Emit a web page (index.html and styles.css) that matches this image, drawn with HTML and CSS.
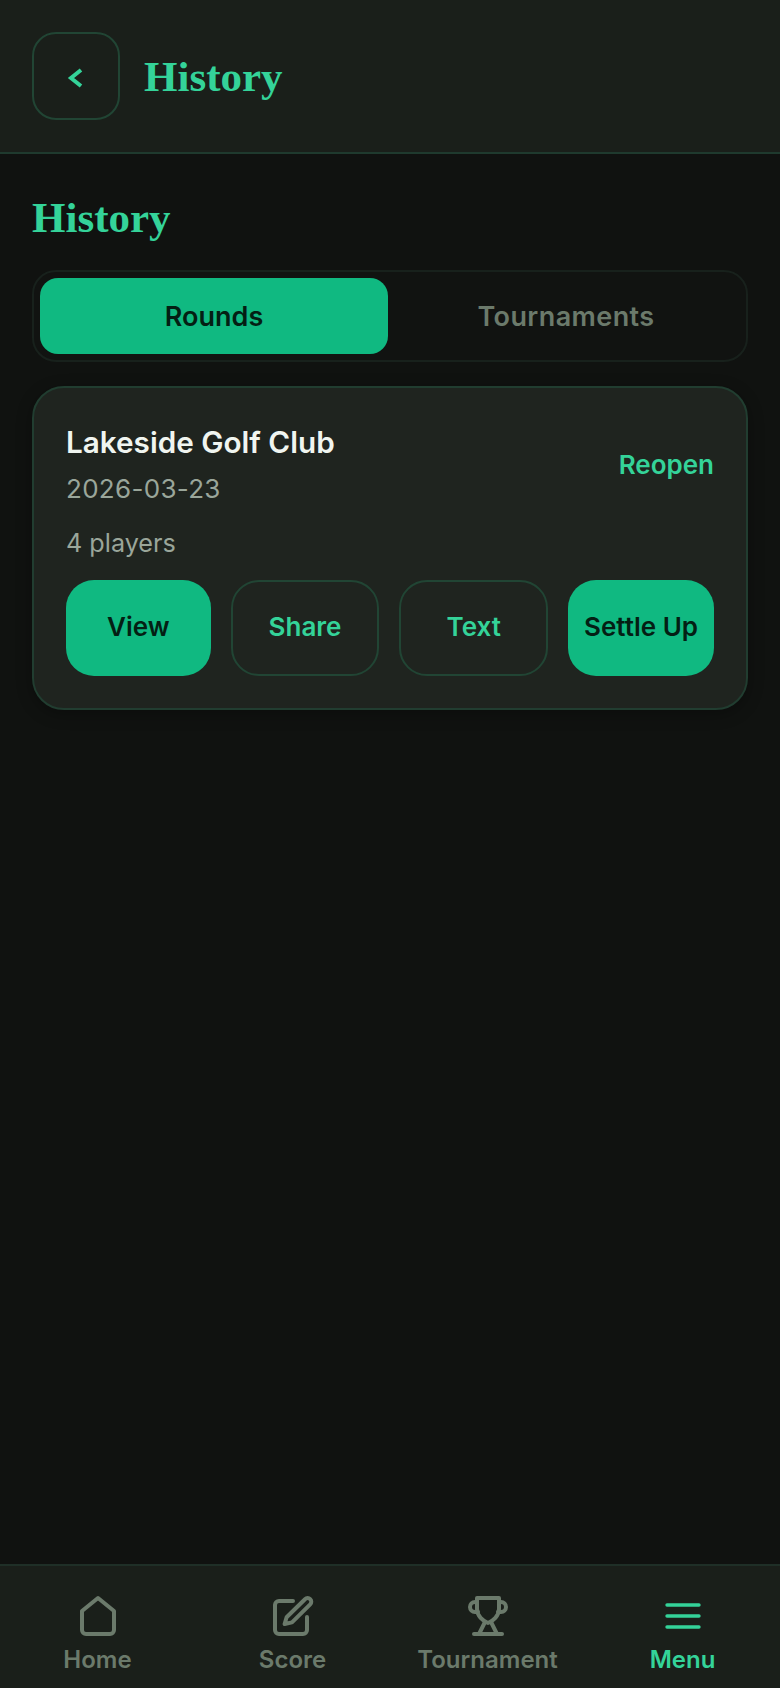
FILE: index.html
```html
<!DOCTYPE html>
<html lang="en">
<head>
    <meta charset="UTF-8">
    <meta name="viewport" content="width=device-width, initial-scale=1.0">
    <title>History</title>
    <link rel="stylesheet" href="styles.css">
</head>
<body>
    <header class="topbar">
        <button class="back-btn" type="button" aria-label="Back">
            <svg width="20" height="24" viewBox="0 0 20 24"><path d="M15 4 L5 12 L15 20"/></svg>
        </button>
        <h1 class="serif-title">History</h1>
    </header>

    <main class="content">
        <h2 class="serif-title">History</h2>

        <div class="tabs">
            <button class="tab active" type="button">Rounds</button>
            <button class="tab" type="button">Tournaments</button>
        </div>

        <section class="card">
            <div class="card-head">
                <div>
                    <div class="course">Lakeside Golf Club</div>
                    <div class="meta date">2026-03-23</div>
                </div>
                <a class="reopen" href="#">Reopen</a>
            </div>
            <div class="meta players">4 players</div>
            <div class="actions">
                <button class="action solid" type="button">View</button>
                <button class="action outline" type="button">Share</button>
                <button class="action outline" type="button">Text</button>
                <button class="action solid" type="button">Settle Up</button>
            </div>
        </section>
    </main>

    <nav class="bottom-nav">
        <a class="nav-item" href="#">
            <svg viewBox="0 0 24 24"><path d="M12 3 L20 9.5 V19 a2 2 0 0 1-2 2 H6 a2 2 0 0 1-2-2 V9.5 Z"/></svg>
            <span>Home</span>
        </a>
        <a class="nav-item" href="#">
            <svg viewBox="0 0 24 24">
                <path d="M12 4.5 H5 a2 2 0 0 0-2 2 V19 a2 2 0 0 0 2 2 h12 a2 2 0 0 0 2-2 v-6.5"/>
                <path d="M18 3.6 a1.8 1.8 0 0 1 2.6 2.6 L11.5 15.2 L7.8 16 L8.8 12.6 Z"/>
            </svg>
            <span>Score</span>
        </a>
        <a class="nav-item" href="#">
            <svg viewBox="0 0 24 24">
                <path d="M6.5 3 H17.5 V8.5 C17.5 12 14.5 14.5 12 15.5 C9.5 14.5 6.5 12 6.5 8.5 Z"/>
                <path d="M6.5 5 H5.5 a2.5 2.5 0 0 0 0 5 H7"/>
                <path d="M17.5 5 H18.5 a2.5 2.5 0 0 1 0 5 H17"/>
                <path d="M10.5 15 L7.5 21"/>
                <path d="M13.5 15 L16.5 21"/>
                <path d="M5 21 H19"/>
            </svg>
            <span>Tournament</span>
        </a>
        <a class="nav-item current" href="#">
            <svg class="thin" viewBox="0 0 24 24"><path d="M4 6.5 H20 M4 12 H20 M4 17.5 H20"/></svg>
            <span>Menu</span>
        </a>
    </nav>
</body>
</html>
```

FILE: styles.css
```css
* {
    box-sizing: border-box;
}

html,
body {
    height: 100%;
}

body {
    margin: 0;
    display: flex;
    flex-direction: column;
    background-color: #101210;
    font-family: Inter, "Liberation Sans", sans-serif;
    color: #f0f5f0;
}

button {
    font-family: inherit;
    cursor: pointer;
}

a {
    text-decoration: none;
}

.serif-title {
    margin: 0;
    font-family: "Liberation Serif", serif;
    font-size: 43px;
    font-weight: 700;
    line-height: 56px;
    color: #34d399;
}

/* top bar */
.topbar {
    display: flex;
    align-items: center;
    gap: 24px;
    height: 154px;
    padding: 0 32px;
    background-color: #1a1f1a;
    border-bottom: 2px solid #1f3a2e;
}

.topbar .serif-title {
    margin-top: 2px;
}

.back-btn {
    display: flex;
    align-items: center;
    justify-content: center;
    width: 88px;
    height: 88px;
    padding: 4px 0 0;
    background: none;
    border: 2px solid #214534;
    border-radius: 24px;
}

.back-btn svg path {
    fill: none;
    stroke: #34d399;
    stroke-width: 4;
}

/* page body */
.content {
    flex: 1;
    padding: 36px 32px 0;
}

.tabs {
    display: flex;
    gap: 4px;
    height: 92px;
    margin-top: 24px;
    padding: 6px;
    background-color: #111311;
    border: 2px solid #18211c;
    border-radius: 24px;
}

.tab {
    flex: 1;
    background: none;
    border: none;
    border-radius: 18px;
    font-size: 27px;
    font-weight: 600;
    letter-spacing: 0.4px;
    color: #6b7a6b;
}

.tab.active {
    background-color: #10b981;
    letter-spacing: 0;
    color: #041f14;
}

.card {
    margin-top: 24px;
    padding: 32px;
    background-color: #1f241f;
    border: 2px solid #213d30;
    border-radius: 32px;
    box-shadow: 0 4px 16px rgba(0, 0, 0, 0.3);
}

.card-head {
    display: flex;
    align-items: center;
    justify-content: space-between;
}

.course {
    font-size: 29.7px;
    font-weight: 600;
    line-height: 44px;
}

.meta {
    font-size: 26px;
    line-height: 38px;
    color: #9aa69a;
}

.date {
    margin-top: 6px;
    letter-spacing: 0.3px;
}

.players {
    margin-top: 16px;
    font-size: 25.2px;
}

.reopen {
    font-size: 26px;
    font-weight: 600;
    color: #34d399;
}

.actions {
    display: flex;
    gap: 20px;
    margin-top: 18px;
}

.action {
    flex: 1;
    height: 96px;
    padding: 0 16px 4px;
    border-radius: 28px;
    font-size: 26px;
    font-weight: 600;
    white-space: nowrap;
}

.action.solid {
    background-color: #10b981;
    border: none;
    color: #041f14;
}

.action.outline {
    background: none;
    border: 2px solid #214534;
    color: #34d399;
}

/* bottom navigation */
.bottom-nav {
    display: flex;
    height: 124px;
    background-color: #1a1f1a;
    border-top: 2px solid #1f2f27;
}

.nav-item {
    flex: 1;
    display: flex;
    flex-direction: column;
    align-items: center;
    padding-top: 26px;
    font-size: 24px;
    font-weight: 600;
    line-height: 30px;
    color: #6b7a6b;
}

.nav-item svg {
    width: 48px;
    height: 48px;
    margin-bottom: 5px;
    fill: none;
    stroke: currentColor;
    stroke-width: 2;
    stroke-linecap: round;
    stroke-linejoin: round;
}

.nav-item svg.thin {
    stroke-width: 1.7;
}

.nav-item.current {
    color: #34d399;
}
```
